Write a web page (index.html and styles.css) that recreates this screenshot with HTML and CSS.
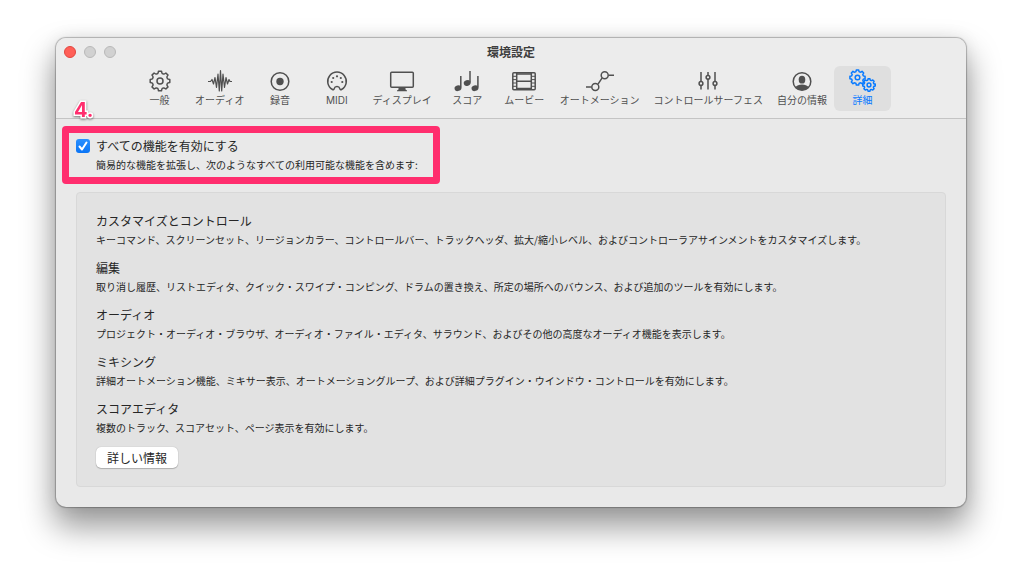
FILE: index.html
```html
<!DOCTYPE html>
<html lang="ja">
<head>
<meta charset="utf-8">
<meta name="viewport" content="width=device-width, initial-scale=1">
<title>環境設定</title>
<link rel="stylesheet" href="styles.css">
</head>
<body>
<svg class="defs" aria-hidden="true">
  <symbol id="gear" viewBox="-11 -11 22 22" overflow="visible">
    <path vector-effect="non-scaling-stroke" d="M-2.2-7.5Q-1.8-7.9-1.5-9.8H1.5Q1.8-7.9 2.2-7.5L3.7-6.9Q4.3-6.8 5.9-8L8-5.9Q6.8-4.3 6.9-3.7L7.5-2.2Q7.9-1.8 9.8-1.5V1.5Q7.9 1.8 7.5 2.2L6.9 3.7Q6.8 4.3 8 5.9L5.9 8Q4.3 6.8 3.7 6.9L2.2 7.5Q1.8 7.9 1.5 9.8H-1.5Q-1.8 7.9-2.2 7.5L-3.7 6.9Q-4.3 6.8-5.9 8L-8 5.9Q-6.8 4.3-6.9 3.7L-7.5 2.2Q-7.9 1.8-9.8 1.5V-1.5Q-7.9-1.8-7.5-2.2L-6.9-3.7Q-6.8-4.3-8-5.9L-5.9-8Q-4.3-6.8-3.7-6.9Z"/>
    <circle vector-effect="non-scaling-stroke" r="3"/>
  </symbol>
</svg>
<main class="window">
  <header class="header">
    <div class="titlebar">
      <div class="lights">
        <button class="light light-close" type="button" aria-label="閉じる"></button>
        <button class="light" type="button" aria-label="しまう" disabled></button>
        <button class="light" type="button" aria-label="拡大" disabled></button>
      </div>
      <h1 class="title">環境設定</h1>
    </div>
    <nav class="toolbar">
      <button class="tab" type="button">
        <svg class="icon" viewBox="0 0 28 24"><use href="#gear" x="3" y="1" width="22" height="22"/></svg>
        <span>一般</span>
      </button>
      <button class="tab" type="button">
        <svg class="icon wave" viewBox="0 0 28 24"><path d="M2 12.500H4.500L6 10.500L7.500 15L9 8.500L10.500 18.500L12 5L13.300 22L14.500 1.500L15.700 22L17 5L18.500 18.500L20 8.500L21.500 15L23 10.500L24 12.500H26"/></svg>
        <span>オーディオ</span>
      </button>
      <button class="tab" type="button">
        <svg class="icon" viewBox="0 0 28 24"><circle cx="14" cy="12.500" r="8.800"/><circle class="solid" cx="14" cy="12.500" r="3.700"/></svg>
        <span>録音</span>
      </button>
      <button class="tab" type="button">
        <svg class="icon" viewBox="0 0 28 24"><path d="M9.500 20.500A9.300 9.300 0 1 1 18.500 20.500Q17.200 21.200 16.800 19.600Q16.300 17.600 14 17.600T11.200 19.600Q10.800 21.200 9.500 20.500Z"/><g class="solid"><circle cx="8.700" cy="13" r="1.100"/><circle cx="10.200" cy="9" r="1.100"/><circle cx="14" cy="7.300" r="1.100"/><circle cx="17.800" cy="9" r="1.100"/><circle cx="19.300" cy="13" r="1.100"/></g></svg>
        <span>MIDI</span>
      </button>
      <button class="tab" type="button">
        <svg class="icon" viewBox="0 0 28 24"><rect x="2.700" y="3.200" width="22.600" height="15" rx="1"/><path class="solid" d="M10.500 18.500H17.500V20.500L19 21.500V22.200H9V21.500L10.500 20.500Z"/></svg>
        <span>ディスプレイ</span>
      </button>
      <button class="tab" type="button">
        <svg class="icon" viewBox="0 0 28 24"><g class="solid"><ellipse cx="5" cy="19.200" rx="3.500" ry="2.800" transform="rotate(-20 5 19.200)"/><ellipse cx="14.200" cy="14" rx="3.500" ry="2.800" transform="rotate(-20 14.200 14)"/><ellipse cx="22" cy="19.200" rx="3.500" ry="2.800" transform="rotate(-20 22 19.200)"/></g><path d="M7.800 18.500V7M17 13.500V2M24.900 18.500V7"/></svg>
        <span>スコア</span>
      </button>
      <button class="tab" type="button">
        <svg class="icon" viewBox="0 0 28 24"><rect x="2.800" y="3.800" width="22.400" height="17" rx="1"/><path d="M6.700 4V21M21.300 4V21M6.700 12.300H21.300M6.700 5H21.300M6.700 19.600H21.300"/><path class="thin" d="M3 7.300H6.500M3 10.600H6.500M3 14H6.500M3 17.300H6.500M21.500 7.300H25M21.500 10.600H25M21.500 14H25M21.500 17.300H25"/></svg>
        <span>ムービー</span>
      </button>
      <button class="tab" type="button">
        <svg class="icon" viewBox="0 0 28 24"><path d="M0 18H5.500M12 15.200L16 9.200M22.500 6.200H28"/><circle cx="9.300" cy="18" r="3.500"/><circle cx="18.700" cy="6.200" r="3.500"/></svg>
        <span>オートメーション</span>
      </button>
      <button class="tab" type="button">
        <svg class="icon" viewBox="0 0 28 24"><path d="M7 3V12.500M7 16.500V20.500M14 3V6M14 10V20.500M21 3V12.500M21 16.500V20.500"/><circle cx="7" cy="14.500" r="1.900"/><circle cx="14" cy="8.300" r="1.900"/><circle cx="21" cy="14.500" r="1.900"/></svg>
        <span>コントロールサーフェス</span>
      </button>
      <button class="tab" type="button">
        <svg class="icon" viewBox="0 0 28 24"><circle cx="14" cy="12.500" r="8.800"/><ellipse class="solid" cx="14" cy="10.700" rx="3.300" ry="3.900"/><path class="solid" d="M7.500 18Q9.500 15.500 14 15.500T20.500 18Q18 21.300 14 21.300T7.500 18Z"/></svg>
        <span>自分の情報</span>
      </button>
      <button class="tab tab-selected" type="button" aria-current="page">
        <svg class="icon" viewBox="0 0 28 24"><use href="#gear" x="1" y="0" width="17" height="17"/><use href="#gear" x="14" y="9" width="14" height="14"/></svg>
        <span>詳細</span>
      </button>
    </nav>
    <span class="step">4.</span>
  </header>
  <div class="content">
    <section class="enable">
      <div class="enable-row">
        <input class="checkbox" type="checkbox" id="enable-all" aria-describedby="enable-note" checked>
        <label class="heading" for="enable-all">すべての機能を有効にする</label>
      </div>
      <p class="note enable-note" id="enable-note">簡易的な機能を拡張し、次のようなすべての利用可能な機能を含めます:</p>
    </section>
    <section class="panel">
      <div class="feature">
        <h2 class="heading">カスタマイズとコントロール</h2>
        <p class="note">キーコマンド、スクリーンセット、リージョンカラー、コントロールバー、トラックヘッダ、拡大/縮小レベル、およびコントローラアサインメントをカスタマイズします。</p>
      </div>
      <div class="feature">
        <h2 class="heading">編集</h2>
        <p class="note">取り消し履歴、リストエディタ、クイック・スワイプ・コンピング、ドラムの置き換え、所定の場所へのバウンス、および追加のツールを有効にします。</p>
      </div>
      <div class="feature">
        <h2 class="heading">オーディオ</h2>
        <p class="note">プロジェクト・オーディオ・ブラウザ、オーディオ・ファイル・エディタ、サラウンド、およびその他の高度なオーディオ機能を表示します。</p>
      </div>
      <div class="feature">
        <h2 class="heading">ミキシング</h2>
        <p class="note">詳細オートメーション機能、ミキサー表示、オートメーショングループ、および詳細プラグイン・ウインドウ・コントロールを有効にします。</p>
      </div>
      <div class="feature">
        <h2 class="heading">スコアエディタ</h2>
        <p class="note">複数のトラック、スコアセット、ページ表示を有効にします。</p>
      </div>
      <button class="more" type="button">詳しい情報</button>
    </section>
  </div>
</main>
</body>
</html>
```
FILE: styles.css
```css
*,
*::after {
  box-sizing: border-box;
}

body {
  margin: 0;
  padding: 38px 56px 74px;
  background: #fff;
  color: #262626;
  font-family: "Noto Sans CJK JP", sans-serif;
}

button {
  margin: 0;
  border: 0;
  font-family: inherit;
}

.defs {
  position: absolute;
  width: 0;
  height: 0;
}

.window {
  border-radius: 10px;
  background: #e9e9e9;
  box-shadow: 0 0 1px 1px rgba(0, 0, 0, 0.25), 0 18px 32px 2px rgba(0, 0, 0, 0.4), 0 0 18px rgba(0, 0, 0, 0.08);
}

.header {
  position: relative;
  padding-bottom: 7px;
  border-bottom: 1px solid #c4c4c4;
  border-radius: 10px 10px 0 0;
  background: #ececec;
}

.titlebar {
  display: grid;
  grid-template-columns: 1fr auto 1fr;
  align-items: center;
  height: 28px;
  padding: 0 8px;
}

.lights {
  display: flex;
  gap: 8px;
}

.light {
  width: 12px;
  height: 12px;
  padding: 0;
  border: 1px solid #b9b9b9;
  border-radius: 50%;
  background: #d1d1d1;
}

.light-close {
  border-color: #e2463f;
  background: #ff5f57;
}

.title {
  margin: 0;
  color: #3e3e3e;
  font-size: 12px;
  font-weight: 700;
  line-height: 18px;
}

.toolbar {
  display: flex;
  justify-content: center;
}

.tab {
  display: flex;
  flex-direction: column;
  align-items: center;
  min-width: 57px;
  padding: 3px 7px 4px;
  border-radius: 6px;
  background: transparent;
  color: #505050;
  font-family: Inter, "Noto Sans CJK JP", sans-serif;
  font-size: 10px;
  line-height: 14px;
  white-space: nowrap;
}

.tab-selected {
  background: #dfdfdf;
  color: #087aff;
}

.icon {
  width: 28px;
  height: 24px;
  fill: none;
  stroke: currentColor;
  stroke-width: 1.5;
  stroke-linejoin: round;
}

.wave {
  stroke-width: 1.2;
}

.thin {
  stroke-width: 1;
}

.solid {
  fill: currentColor;
  stroke: none;
}

.step {
  position: absolute;
  bottom: -4px;
  left: 18px;
  color: #ff2e6e;
  font-family: Inter, "Liberation Sans", sans-serif;
  font-size: 20px;
  font-weight: 700;
  line-height: 24px;
  paint-order: stroke fill;
  -webkit-text-stroke: 3px #fff;
  filter: drop-shadow(0 1px 1px rgba(0, 0, 0, 0.5));
}

.content {
  padding: 17px 20px 20px;
}

.enable {
  position: relative;
  width: fit-content;
  margin-bottom: 18px;
}

.enable::after {
  content: "";
  position: absolute;
  inset: -10px -22px -10px -14px;
  border: 7px solid #ff2e6e;
  border-radius: 4px;
  pointer-events: none;
}

.enable-row {
  display: flex;
  align-items: center;
  gap: 6px;
}

.checkbox {
  width: 14px;
  height: 14px;
  margin: 0;
  appearance: none;
  border-radius: 3px;
  background: #c8c8c8;
}

.checkbox:checked {
  background: url("data:image/svg+xml,%3Csvg xmlns='http://www.w3.org/2000/svg' viewBox='0 0 14 14'%3E%3Cpath d='M3.500 7.500L6 10.500L10.500 3.500' fill='none' stroke='white' stroke-width='2' stroke-linecap='round' stroke-linejoin='round'/%3E%3C/svg%3E"), linear-gradient(#2a90ff, #0a74f5);
}

.heading {
  margin: 0;
  font-size: 12px;
  font-weight: 400;
  line-height: 20px;
}

.note {
  margin: 0;
  font-size: 10px;
  line-height: 18px;
}

.enable-note {
  padding-left: 20px;
}

.panel {
  display: flex;
  flex-direction: column;
  gap: 9px;
  padding: 18px 19px;
  border: 1px solid #d8d8d8;
  border-radius: 4px;
  background: #e2e2e2;
}

.more {
  align-self: flex-start;
  margin-top: 1px;
  padding: 0 11px;
  border-radius: 5px;
  background: #fff;
  box-shadow: 0 0 1px rgba(0, 0, 0, 0.3), 0 1px 1px rgba(0, 0, 0, 0.2);
  color: #262626;
  font-size: 12px;
  line-height: 21px;
}
```
